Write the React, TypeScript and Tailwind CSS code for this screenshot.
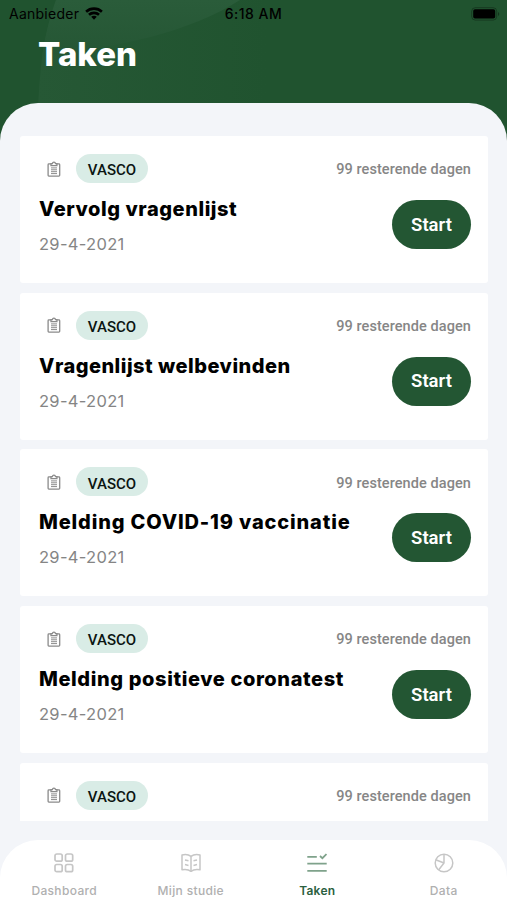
import type { ReactNode } from "react";

type Task = {
  id: number;
  title?: string;
  titleClass?: string;
  date?: string;
};

// the last one only peeks out above the tab bar
const tasks: Task[] = [
  { id: 1, title: "Vervolg vragenlijst", titleClass: "tracking-[0.56px]", date: "29-4-2021" },
  { id: 2, title: "Vragenlijst welbevinden", titleClass: "tracking-[0.49px]", date: "29-4-2021" },
  { id: 3, title: "Melding COVID-19 vaccinatie", titleClass: "tracking-[0.84px]", date: "29-4-2021" },
  { id: 4, title: "Melding positieve coronatest", titleClass: "tracking-[0.61px]", date: "29-4-2021" },
  { id: 5 },
];

function WifiIcon() {
  return (
    <svg width="18" height="13" viewBox="0 0 19 14" fill="none" stroke="#000" strokeWidth="2.8">
      <path d="M1 5.1C5.7 .7 13.3 .7 18 5.1" />
      <path d="M4.1 8.4c3-2.8 7.8-2.8 10.8 0" />
      <path d="M9.5 13.6 6.5 10.6c1.6-1.5 4.4-1.5 6 0z" fill="#000" stroke="none" />
    </svg>
  );
}

function BatteryIcon() {
  return (
    <svg width="29" height="14" viewBox="0 0 29 14" fill="none">
      <rect x=".7" y=".7" width="25" height="12.4" rx="3.6" stroke="#000" strokeOpacity=".3" />
      <rect x="2.2" y="2.3" width="22" height="9.2" rx="1.8" fill="#000" />
      <path d="M27.2 5v4c1.3-.6 1.3-3.4 0-4z" fill="#000" fillOpacity=".45" />
    </svg>
  );
}

function ClipboardIcon() {
  return (
    <svg width="14" height="16" viewBox="0 0 14 16" fill="none" stroke="#8a8a8a" strokeWidth="1.3">
      <rect x="1.1" y="2.9" width="11.6" height="12.2" rx=".8" />
      <path d="M4 4.6V2.7h1.4c.2-2.2 2.9-2.2 3.1 0h1.4v1.9z" fill="#fff" />
      <path d="M4 6.9h6M4 8.8h6M4 10.7h6M4 12.6h6" strokeWidth="1" />
    </svg>
  );
}

function GridIcon() {
  return (
    <svg width="20" height="20" viewBox="0 0 20 20" fill="none" stroke="#c6c6c6" strokeWidth="1.7">
      <rect x="1" y="1" width="7.2" height="7.2" rx="1.8" />
      <rect x="11.5" y="1" width="7.2" height="7.2" rx="1.8" />
      <rect x="1" y="11.5" width="7.2" height="7.2" rx="1.8" />
      <rect x="11.5" y="11.5" width="7.2" height="7.2" rx="1.8" />
    </svg>
  );
}

function BookIcon() {
  return (
    <svg width="20" height="20" viewBox="0 0 20 20" fill="none" stroke="#c6c6c6" strokeWidth="1.5" strokeLinejoin="round">
      <path d="M10 3.4C7.8 1.7 4.3 1.3 1 2v14.8c3.3-.6 6.8-.2 9 1.5 2.2-1.7 5.7-2.1 9-1.5V2c-3.3-.7-6.8-.3-9 1.4z" />
      <path d="M10 3.4v14.9M4 7l3.5.8M4 11.6l3.5.8M16 7l-3.5.8M16 11.6l-3.5.8" />
    </svg>
  );
}

function TasksIcon() {
  return (
    <svg width="20" height="20" viewBox="0 0 20 20" fill="none" stroke="#7fa28b" strokeWidth="1.8">
      <path d="M.3 3.8h9.5M.3 10.7h19.4M.3 17.8h19.4" />
      <path d="m13 3 2.4 2.2 4.1-4.1" />
    </svg>
  );
}

function ChartIcon() {
  return (
    <svg width="20" height="20" viewBox="0 0 20 20" fill="none" stroke="#c6c6c6" strokeWidth="1.5">
      <circle cx="10" cy="10" r="8.8" />
      <path d="M10 1.1V10L4.6 17M10 10 1.7 6.8" />
    </svg>
  );
}

function TaskCard({ task }: { task: Task }) {
  return (
    <article className="h-[147px] shrink-0 rounded-[3px] bg-white pt-[18px] pr-[17px] pl-[19px]">
      <div className="flex h-[29px] items-center">
        <div className="ml-[8px] flex w-[29px]">
          <ClipboardIcon />
        </div>
        <span className="flex h-[29px] w-[72px] items-center justify-center rounded-full bg-[#d9ece6] pt-[4px] font-['Roboto',sans-serif] text-[15px] font-medium text-[#0b1512]">
          VASCO
        </span>
        <span className="ml-auto pt-[3px] font-['Roboto',sans-serif] text-[14.5px] font-medium tracking-[0.08px] text-[#868686]">
          99 resterende dagen
        </span>
      </div>
      {task.title && (
        <div className="flex justify-between">
          <div className="pt-[13px]">
            <h2 className={`text-[20px] leading-[26px] font-extrabold whitespace-nowrap text-black ${task.titleClass}`}>
              {task.title}
            </h2>
            <p className="mt-[9px] text-[16.5px] leading-[26px] tracking-[0.3px] text-[#858585]">{task.date}</p>
          </div>
          <button className="mt-[17px] h-[49px] w-[79px] shrink-0 rounded-full bg-[#235633] pt-[2px] font-['Roboto',sans-serif] text-[18.5px] font-semibold text-white">
            Start
          </button>
        </div>
      )}
    </article>
  );
}

function Tab({ icon, label, active }: { icon: ReactNode; label: string; active?: boolean }) {
  return (
    <div className="flex flex-1 flex-col items-center pt-[13px]">
      {icon}
      <span
        className={`mt-[10px] text-[12px] leading-[16px] whitespace-nowrap ${
          active ? "font-semibold tracking-[0.2px] text-[#2b6040]" : "font-medium tracking-[0.35px] text-[#b0b0b0]"
        }`}
      >
        {label}
      </span>
    </div>
  );
}

export default function App() {
  return (
    <div className="relative h-[900px] w-[507px] overflow-hidden bg-[#20532f] font-['Inter',sans-serif]">
      <svg className="absolute top-0 left-0" width="507" height="150" viewBox="0 0 507 150">
        <defs>
          <linearGradient id="leaf" x1="0" y1="0" x2="0" y2="1">
            <stop offset="0" stopColor="#2a5c3a" />
            <stop offset="1" stopColor="#255634" />
          </linearGradient>
          <linearGradient id="glow" x1="0" y1="0" x2="1" y2="0">
            <stop offset="0" stopColor="#265835" />
            <stop offset="1" stopColor="#20532f" />
          </linearGradient>
        </defs>
        <path d="M56 0C43 36 38 70 37 150h230V0z" fill="url(#glow)" />
        <path d="M56 0C49 20 45 38 42 56 120 47 190 32 240 0z" fill="url(#leaf)" />
      </svg>

      <div className="relative flex h-full flex-col">
        <header className="h-[103px] shrink-0">
          <div className="grid h-[27px] grid-cols-3 items-center text-black">
            <div className="flex items-center gap-[6px] pl-[9px] text-[14px] tracking-[0.25px]">
              <span>Aanbieder</span>
              <WifiIcon />
            </div>
            <span className="text-center text-[14px] font-medium tracking-[0.5px]">6:18 AM</span>
            <div className="flex justify-end pr-[7px]">
              <BatteryIcon />
            </div>
          </div>
          <h1 className="pt-[7px] pl-[38px] text-[33px] leading-[40px] font-extrabold text-white">Taken</h1>
        </header>

        <main className="flex min-h-0 flex-1 flex-col rounded-t-[38px] bg-[#f3f5f9]">
          <div className="flex h-[718px] shrink-0 flex-col gap-[9.7px] overflow-hidden pt-[33px] pr-[19px] pl-[20px]">
            {tasks.map((task) => (
              <TaskCard key={task.id} task={task} />
            ))}
          </div>
          <nav className="mt-[19px] flex h-[60px] shrink-0 rounded-t-[38px] bg-white pl-px">
            <Tab icon={<GridIcon />} label="Dashboard" />
            <Tab icon={<BookIcon />} label="Mijn studie" />
            <Tab icon={<TasksIcon />} label="Taken" active />
            <Tab icon={<ChartIcon />} label="Data" />
          </nav>
        </main>
      </div>
    </div>
  );
}
